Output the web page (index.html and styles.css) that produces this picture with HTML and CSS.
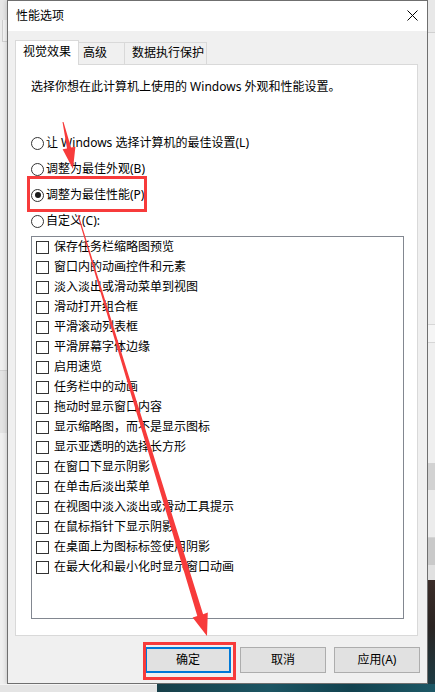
FILE: index.html
```html
<!DOCTYPE html>
<html lang="zh-CN">
<head>
<meta charset="utf-8">
<title>性能选项</title>
<link rel="stylesheet" href="styles.css">
</head>
<body>
<div class="screen">
  <div class="side side-left">
    <div class="lseg lseg-1"></div>
    <div class="lseg lseg-2"></div>
    <div class="lseg lseg-3"></div>
    <div class="lseg lseg-4"></div>
    <div class="lseg lseg-5"></div>
  </div>

  <div class="dialog">
    <div class="titlebar">
      <span class="title">性能选项</span>
      <svg class="close" width="11" height="11" viewBox="0 0 11 11" aria-hidden="true">
        <path d="M0.5 0.5 L10.5 10.5 M10.5 0.5 L0.5 10.5" stroke="#000" stroke-width="1" fill="none"/>
      </svg>
    </div>
    <div class="dlg-body">
      <div class="tabs">
        <div class="tab tab-active">视觉效果</div>
        <div class="tab tab-adv">高级</div>
        <div class="tab tab-dep">数据执行保护</div>
      </div>
      <div class="panel">
        <p class="intro">选择你想在此计算机上使用的 Windows 外观和性能设置。</p>
        <div class="radios">
          <div class="radio"><span class="rbox"></span><span>让 Windows 选择计算机的最佳设置(L)</span></div>
          <div class="radio"><span class="rbox"></span><span>调整为最佳外观(B)</span></div>
          <div class="radio"><span class="rbox rbox-on"></span><span>调整为最佳性能(P)</span></div>
          <div class="radio"><span class="rbox"></span><span>自定义(C):</span></div>
        </div>
        <div class="listbox">
          <div class="item"><span class="cbox"></span><span>保存任务栏缩略图预览</span></div>
          <div class="item"><span class="cbox"></span><span>窗口内的动画控件和元素</span></div>
          <div class="item"><span class="cbox"></span><span>淡入淡出或滑动菜单到视图</span></div>
          <div class="item"><span class="cbox"></span><span>滑动打开组合框</span></div>
          <div class="item"><span class="cbox"></span><span>平滑滚动列表框</span></div>
          <div class="item"><span class="cbox"></span><span>平滑屏幕字体边缘</span></div>
          <div class="item"><span class="cbox"></span><span>启用速览</span></div>
          <div class="item"><span class="cbox"></span><span>任务栏中的动画</span></div>
          <div class="item"><span class="cbox"></span><span>拖动时显示窗口内容</span></div>
          <div class="item"><span class="cbox"></span><span>显示缩略图，而不是显示图标</span></div>
          <div class="item"><span class="cbox"></span><span>显示亚透明的选择长方形</span></div>
          <div class="item"><span class="cbox"></span><span>在窗口下显示阴影</span></div>
          <div class="item"><span class="cbox"></span><span>在单击后淡出菜单</span></div>
          <div class="item"><span class="cbox"></span><span>在视图中淡入淡出或滑动工具提示</span></div>
          <div class="item"><span class="cbox"></span><span>在鼠标指针下显示阴影</span></div>
          <div class="item"><span class="cbox"></span><span>在桌面上为图标标签使用阴影</span></div>
          <div class="item"><span class="cbox"></span><span>在最大化和最小化时显示窗口动画</span></div>
        </div>
      </div>
      <div class="buttons">
        <button class="btn btn-default">确定</button>
        <button class="btn">取消</button>
        <button class="btn">应用(A)</button>
      </div>
    </div>
  </div>

  <div class="side side-right">
    <div class="rseg rseg-1"></div>
    <div class="rseg rseg-2"></div>
    <div class="rseg rseg-3"></div>
    <div class="rseg rseg-4"></div>
    <div class="rseg rseg-5"></div>
    <div class="rseg rseg-6"></div>
    <div class="rseg rseg-7"></div>
    <div class="rseg rseg-8"></div>
    <div class="rseg rseg-9"></div>
  </div>

  <div class="bottom">
    <div class="bottom-left"></div>
    <div class="bottom-right"></div>
  </div>
</div>

<svg class="annot" width="435" height="692" viewBox="0 0 435 692" aria-hidden="true">
  <rect x="28.5" y="177.5" width="117" height="33" fill="none" stroke="#f73b3b" stroke-width="3"/>
  <rect x="144.5" y="643.5" width="90" height="35" fill="none" stroke="#f73b3b" stroke-width="3"/>
  <polygon points="62.5,122.1 63.5,121.9 71,147.6 75.4,146.8 73,169 62.6,149.2 67,148.4" fill="#f73b3b"/>
  <polygon points="77.5,215.2 78.5,214.8 203.1,614.2 207.8,612.6 207,636 192.6,617.6 197.3,616" fill="#f73b3b"/>
</svg>
</body>
</html>
```

FILE: styles.css
```css
* {
  box-sizing: border-box;
}

html,
body {
  margin: 0;
  padding: 0;
}

body {
  width: 435px;
  height: 692px;
  overflow: hidden;
  position: relative;
  background: #ececec;
  font-family: "Noto Sans", "Noto Sans CJK SC", sans-serif;
  font-size: 12px;
  color: #000;
}

.screen {
  display: grid;
  grid-template-columns: 7px 421px 7px;
  grid-template-rows: 684px 8px;
}

/* ---------- background strips ---------- */
.side {
  display: flex;
  flex-direction: column;
}

.lseg-1 { height: 20px; background: #e6e6e6; }
.lseg-2 { height: 22px; background: #f4f4f4; border-left: 1px solid #cfcfcf; border-bottom: 1px solid #d4d4d4; margin-left: 2px; }
.lseg-3 { height: 328px; background: #efefef; }
.lseg-4 { height: 63px; background: #e3e3e3; border-top: 1px solid #d2d2d2; }
.lseg-5 { flex: 1; background: #efefef; }

.rseg-1 { height: 33px; background: #e8e8e8; border-bottom: 1px solid #d0d0d0; }
.rseg-2 { height: 291px; background: #efefef; }
.rseg-3 { height: 19px; background: #f5f5f5; border-top: 1px solid #d6d6d6; border-bottom: 1px solid #d6d6d6; }
.rseg-4 { height: 120px; background: #efefef; }
.rseg-5 { height: 27px; background: #d2d2d2; }
.rseg-6 { height: 48px; background: #ececec; border-bottom: 1px solid #d4d4d4; }
.rseg-7 { height: 27px; background: #c9c9c9; }
.rseg-8 { height: 15px; background: #e0e0e0; }
.rseg-9 { flex: 1; background: linear-gradient(180deg, #3b2c28 0%, #2a2422 45%, #1d3b44 100%); }

.bottom {
  grid-column: 1 / 4;
  display: flex;
}

.bottom-left {
  width: 157px;
  background: #e4e4e4;
  border-top: 1px solid #f4f4f4;
}

.bottom-right {
  flex: 1;
  background: linear-gradient(90deg, #173f49 0%, #1c5563 40%, #12424f 70%, #1d5866 100%);
}

/* ---------- dialog ---------- */
.dialog {
  border: 1px solid #6f6f6f;
  background: #f0f0f0;
  display: flex;
  flex-direction: column;
  box-shadow: 0 0 5px rgba(0, 0, 0, 0.22);
}

.titlebar {
  height: 30px;
  background: #fff;
  display: flex;
  align-items: center;
  justify-content: space-between;
  padding-left: 8px;
}

.title {
  line-height: 16px;
}

.close {
  display: block;
  margin-right: 9px;
  margin-bottom: 2px;
}

.dlg-body {
  flex: 1;
  padding: 9px 9px 0 7px;
}

/* ---------- tabs ---------- */
.tabs {
  display: flex;
  align-items: flex-end;
  height: 24px;
}

.tab {
  height: 22px;
  border: 1px solid #d9d9d9;
  border-bottom: none;
  background: #f0f0f0;
  line-height: 20px;
  white-space: nowrap;
}

.tab-active {
  width: 64px;
  height: 25px;
  margin-bottom: -1px;
  padding-left: 7px;
  background: #fff;
  line-height: 22px;
  position: relative;
  z-index: 1;
}

.tab-adv {
  width: 46px;
  border-left: none;
  padding-left: 4px;
}

.tab-dep {
  width: 82px;
  border-left: none;
  padding-left: 7px;
}

/* ---------- panel ---------- */
.panel {
  height: 572px;
  border: 1px solid #d9d9d9;
  background: #fff;
  padding: 14px 0 0 15px;
}

.intro {
  margin: 0;
  height: 16px;
  line-height: 16px;
  white-space: nowrap;
}

.radios {
  margin-top: 35px;
}

.radio {
  height: 26px;
  display: flex;
  align-items: center;
  gap: 2px;
  line-height: 16px;
  white-space: nowrap;
}

.rbox {
  width: 13px;
  height: 13px;
  border: 1px solid #333;
  border-radius: 50%;
  background: #fff;
  display: flex;
  align-items: center;
  justify-content: center;
  flex-shrink: 0;
}

.rbox-on::after {
  content: "";
  width: 6px;
  height: 6px;
  border-radius: 50%;
  background: #1a1a1a;
}

.listbox {
  margin-top: 2px;
  width: 373px;
  height: 383px;
  border: 1px solid #828790;
  background: #fff;
  padding-left: 4px;
}

.item {
  height: 20px;
  display: flex;
  align-items: center;
  gap: 5px;
  line-height: 16px;
  white-space: nowrap;
}

.cbox {
  width: 13px;
  height: 13px;
  border: 1px solid #333;
  background: #fff;
  flex-shrink: 0;
}

/* ---------- buttons ---------- */
.buttons {
  margin-top: 11px;
  margin-right: -2px;
  display: flex;
  justify-content: flex-end;
  gap: 8px;
}

.btn {
  width: 86px;
  height: 26px;
  border: 1px solid #adadad;
  background: #e1e1e1;
  font-family: inherit;
  font-size: 12px;
  line-height: 24px;
  color: #000;
  padding: 0;
  margin: 0;
}

.btn-default {
  border: 2px solid #0078d7;
  line-height: 22px;
  margin-right: 1px;
}

/* ---------- annotation overlay ---------- */
.annot {
  position: absolute;
  left: 0;
  top: 0;
  pointer-events: none;
}
```
